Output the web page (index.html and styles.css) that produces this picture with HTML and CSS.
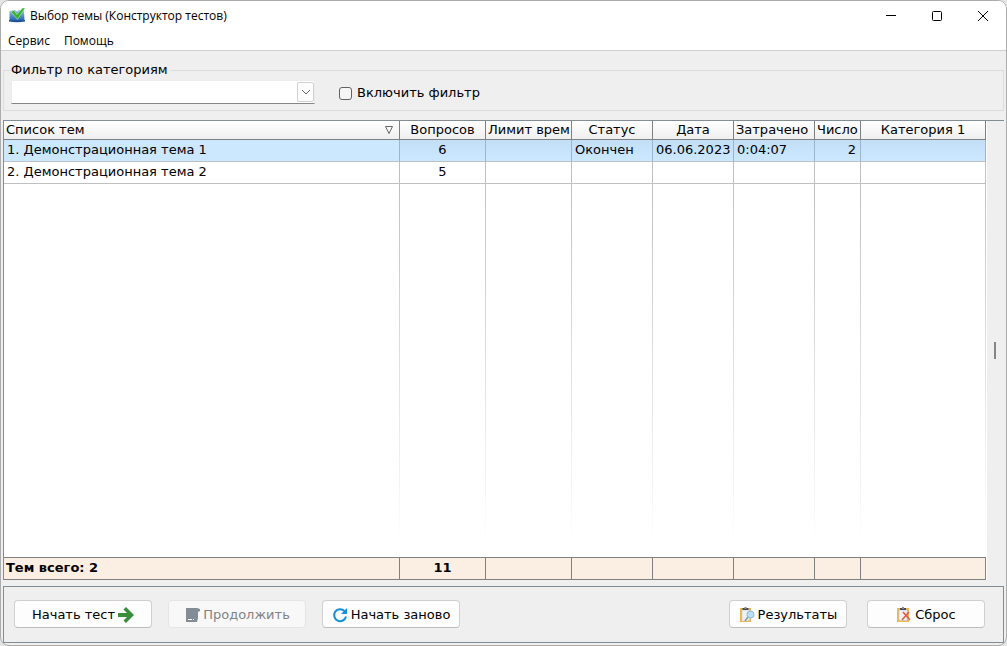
FILE: index.html
```html
<!DOCTYPE html>
<html lang="ru">
<head>
<meta charset="utf-8">
<title>Выбор темы (Конструктор тестов)</title>
<link rel="stylesheet" href="styles.css">
</head>
<body>
<div class="window">
  <header class="titlebar">
    <svg class="app-icon" width="16" height="16" viewBox="0 0 16 16">
      <defs><linearGradient id="book" x1="0" y1="0" x2="0" y2="1"><stop offset="0" stop-color="#9cc4e8"/><stop offset="1" stop-color="#1c5ea8"/></linearGradient></defs>
      <path d="M.5 3 6 2l2 1.500L10 2h5l.5 10.500q-7.500 1-15 0z" fill="url(#book)"/>
      <path d="M0 12q8 1.500 16 0v1.500q-8 1.500-16 0z" fill="#174f91"/>
      <path d="M2 3.500 5 2.500l3 4L13.500 0H16L8.500 11.500z" fill="#35b52c" stroke="#c9f3b8" stroke-width=".5"/>
    </svg>
    <span class="title">Выбор темы (Конструктор тестов)</span>
    <div class="controls">
      <button class="control" aria-label="Свернуть"><svg width="12" height="12" viewBox="0 0 12 12"><path d="M1 5.500h10" /></svg></button>
      <button class="control" aria-label="Развернуть"><svg width="12" height="12" viewBox="0 0 12 12"><rect x="1.500" y="1.500" width="9" height="9" rx="1"/></svg></button>
      <button class="control" aria-label="Закрыть"><svg width="12" height="12" viewBox="0 0 12 12"><path d="m1 1 10 10M11 1 1 11"/></svg></button>
    </div>
  </header>
  <nav class="menu">
    <button class="menu-item">Сервис</button>
    <button class="menu-item">Помощь</button>
  </nav>
  <main class="content">
    <fieldset class="filter">
      <legend><label for="category">Фильтр по категориям</label></legend>
      <div class="filter-row">
        <div class="combo">
          <select id="category"><option></option></select>
          <span class="combo-arrow"><svg width="10" height="6" viewBox="0 0 10 6"><path d="m1 1 4 4 4-4" fill="none" stroke="#666"/></svg></span>
        </div>
        <input type="checkbox" class="check" id="enable">
        <label for="enable">Включить фильтр</label>
      </div>
    </fieldset>
    <div class="grid-area">
      <div class="grid-wrap">
        <table class="grid">
          <colgroup><col><col class="w86"><col class="w86"><col class="w81"><col class="w81"><col class="w81"><col class="w46"><col class="w125"></colgroup>
          <thead>
            <tr>
              <th class="first"><div class="sort"><span>Список тем</span><svg width="8" height="8" viewBox="0 0 8 8"><path d="M.5.5h7L4 7.500z" fill="none" stroke="#666"/></svg></div></th>
              <th>Вопросов</th><th class="start">Лимит врем</th><th>Статус</th><th>Дата</th><th class="start">Затрачено</th><th class="start">Число</th><th>Категория 1</th>
            </tr>
          </thead>
          <tbody>
            <tr class="row selected"><td>1. Демонстрационная тема 1</td><td class="center">6</td><td></td><td>Окончен</td><td>06.06.2023</td><td>0:04:07</td><td class="end">2</td><td></td></tr>
            <tr class="row"><td>2. Демонстрационная тема 2</td><td class="center">5</td><td></td><td></td><td></td><td></td><td></td><td></td></tr>
            <tr class="filler"><td></td><td></td><td></td><td></td><td></td><td></td><td></td><td></td></tr>
          </tbody>
          <tfoot>
            <tr><td>Тем всего: 2</td><td class="center">11</td><td></td><td></td><td></td><td></td><td></td><td></td></tr>
          </tfoot>
        </table>
      </div>
      <div class="splitter"><span class="grip"></span></div>
    </div>
    <footer class="actions">
      <button class="btn wide">Начать тест
        <svg class="arrow" width="16" height="16" viewBox="0 0 16 16"><path d="M0 6h9L5.500 2.500 8 0l8 8-8 8-2.500-2.500L9 10H0z" fill="#388e3c"/></svg>
      </button>
      <button class="btn wide" disabled>
        <svg width="16" height="16" viewBox="0 0 16 16"><path d="M2 1h11l3 1v2l-2 1v6l-1 4H2z" fill="#838d96"/><path d="M4 12.500h4M9 12.500h1" stroke="#fff"/></svg>
        Продолжить
      </button>
      <button class="btn wide">
        <svg width="16" height="16" viewBox="0 0 16 16"><path d="M12.500 4A6 6 0 1 0 14 9.500" fill="none" stroke="#1490d6" stroke-width="2"/><path d="M15 1v6H9z" fill="#1490d6"/></svg>
        Начать заново
      </button>
      <span class="spacer"></span>
      <button class="btn results">
        <svg width="16" height="16" viewBox="0 0 16 16"><path d="M1 1h11v14H1z" fill="#eab84a"/><path d="M3 3h7.500v10l-2 1H3z" fill="#eef0f5" stroke="#c4cad4" stroke-width=".5"/><path d="M3.500 1h6v2h-6z" fill="#444b55"/><path d="M5.500 0h2v2h-2z" fill="#888"/><path d="m9 10-3 4" stroke="#8d959f" stroke-width="1.500"/><circle cx="11.500" cy="7.500" r="3.500" fill="#b9e0f5" stroke="#85b9d6"/></svg>
        Результаты
      </button>
      <button class="btn reset">
        <svg width="16" height="16" viewBox="0 0 16 16"><path d="M1 1h12v14H1z" fill="#eab84a"/><path d="M3 3h8v10.500H3z" fill="#eef0f5" stroke="#c4cad4" stroke-width=".5"/><path d="M4 1h6v2H4z" fill="#444b55"/><path d="M6 0h2v2H6z" fill="#888"/><path d="m7 5 7 8M13 5l-7 8" fill="none" stroke="#dc5b45" stroke-width="1.500"/></svg>
        Сброс
      </button>
    </footer>
  </main>
</div>
</body>
</html>
```
FILE: styles.css
```css
* { box-sizing: border-box; }
body { margin: 0; background: #e4e4e4; color: #000; font: 13px/16px "DejaVu Sans", Verdana, sans-serif; }
button { font: inherit; color: inherit; }
.window { display: flex; flex-direction: column; height: 100vh; border: 1px solid #acacac; border-radius: 9px; background: #efefef; overflow: hidden; }
.titlebar { display: flex; align-items: center; height: 29px; padding-left: 8px; gap: 5px; background: #fff; font: 12px/16px "Open Sans", "Noto Sans", sans-serif; }
.controls { display: flex; margin-left: auto; }
.control { display: flex; align-items: center; justify-content: center; width: 46px; height: 28px; padding: 0; border: 0; background: none; }
.control svg { fill: none; stroke: #000; }
.menu { display: flex; gap: 14px; height: 21px; padding: 1px 7px 0; border-bottom: 1px solid #cfcfcf; background: #fff; font: 12px/20px "Open Sans", "Noto Sans", sans-serif; }
.menu-item { padding: 0; border: 0; background: none; }
.content { display: flex; flex-direction: column; flex: 1; min-height: 0; padding: 11px 2px 2px; }
.filter { margin: 0; padding: 0 7px 6px; border: 1px solid #dcdcdc; }
.filter legend { padding: 0 2px 0 0; }
.filter-row { display: flex; align-items: center; padding-top: 2px; }
.filter-row label { padding-top: 2px; }
.combo { position: relative; width: 304px; height: 24px; margin-right: 24px; }
.combo select { width: 100%; height: 100%; padding: 0 24px 0 4px; border: 1px solid #ececec; border-bottom-color: #858585; background: #fff; appearance: none; }
.combo-arrow { position: absolute; top: 2px; right: 1px; display: flex; align-items: center; justify-content: center; width: 17px; height: 20px; border: 1px solid #d0d0d0; border-radius: 2px; background: #fdfdfd; pointer-events: none; }
.check { width: 13px; height: 13px; margin: 2px 5px 0 0; border: 1px solid #626262; border-radius: 3px; background: #f6f6f6; appearance: none; }
.check:checked { background: #0067c0; }
.grid-area { display: flex; flex: 1; min-height: 0; margin: 9px 0 6px; border-top: 1px solid #838d96; }
.grid-wrap { flex: 1; min-width: 0; border-left: 1px solid #838d96; background: #fff; padding-right: 1px; }
.grid { width: 100%; height: 100%; table-layout: fixed; border-collapse: separate; border-spacing: 0; }
.w86 { width: 86px; }
.w81 { width: 81px; }
.w46 { width: 46px; }
.w125 { width: 125px; }
.grid th { height: 19px; padding: 0; border-right: 1px solid #808080; border-bottom: 1px solid #808080; background: linear-gradient(#fff, #efefef); font-weight: normal; text-align: center; white-space: nowrap; overflow: hidden; }
.grid th.first { padding: 0 6px 0 2px; }
.grid th.start { padding: 0 2px; text-align: left; }
.sort { display: flex; align-items: center; justify-content: space-between; }
.grid td { padding: 0 3px; border-right: 1px solid #c0c0c0; border-bottom: 1px solid #c0c0c0; white-space: nowrap; overflow: hidden; }
.row td { height: 22px; padding-bottom: 2px; }
.selected td { border-right-color: #99b5d0; background: linear-gradient(#c3dff8, #cce8ff); }
.selected td:first-child { background: #cce8ff; }
.grid .center { text-align: center; }
.grid .end { padding-right: 4px; text-align: right; }
.filler td { padding: 0; border: 0; background: linear-gradient(#c0c0c0, #fff 97%) right / 1px 100% no-repeat; }
.grid tfoot td { height: 23px; padding: 0 2px 2px; border-top: 1px solid #808080; border-right-color: #808080; border-bottom-color: #808080; background: #fbeee2; font-weight: bold; }
.splitter { display: flex; align-items: center; justify-content: center; width: 17px; padding-right: 2px; }
.grip { width: 2px; height: 17px; background: #858585; }
.actions { display: flex; align-items: center; gap: 16px; padding: 13px 18px 14px 10px; border: 1px solid #838d96; }
.btn { display: flex; align-items: center; justify-content: center; gap: 3px; height: 28px; padding: 1px 0 0; border: 1px solid #d0d0d0; border-bottom-color: #bdbdbd; border-radius: 4px; background: #fdfdfd; white-space: nowrap; }
.btn:disabled { border-color: #e5e5e5; background: #f8f8f8; color: #838383; }
.wide { width: 138px; }
.results, .reset { width: 118px; }
.reset { margin-left: 4px; }
.spacer { flex: 1; }
```
